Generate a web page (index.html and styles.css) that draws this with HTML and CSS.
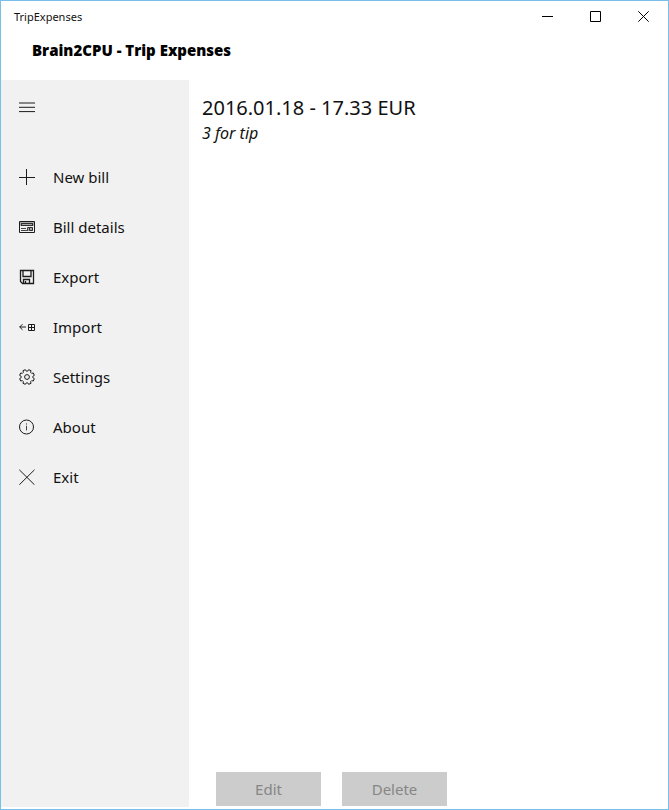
FILE: index.html
```html
<!DOCTYPE html>
<html lang="en">
<head>
  <meta charset="UTF-8">
  <meta name="viewport" content="width=device-width, initial-scale=1.0">
  <title>TripExpenses</title>
  <link rel="stylesheet" href="styles.css">
</head>
<body>
  <div class="window">
    <header class="title-bar">
      <span class="app-name">TripExpenses</span>
      <div class="window-controls">
        <button type="button" aria-label="Minimize">
          <svg width="11" height="11" viewBox="0 0 11 11"><path d="M0 5.5h11"/></svg>
        </button>
        <button type="button" aria-label="Maximize">
          <svg width="11" height="11" viewBox="0 0 11 11"><path d="M.5 .5h10v10h-10z"/></svg>
        </button>
        <button type="button" aria-label="Close">
          <svg width="11" height="11" viewBox="0 0 11 11"><path d="M.3 .3l10.4 10.4M10.7 .3L.3 10.7"/></svg>
        </button>
      </div>
    </header>

    <h1>Brain2CPU - Trip Expenses</h1>

    <div class="content">
      <nav class="sidebar">
        <button type="button" class="menu-toggle" aria-label="Menu">
          <svg width="16" height="16" viewBox="0 0 16 16"><path d="M0 4h16M0 8.3h16M0 12.6h16"/></svg>
        </button>
        <button type="button" class="menu-item">
          <svg width="16" height="16" viewBox="0 0 16 16"><path d="M0 8.5h16M7.5 0v16"/></svg>
          New bill
        </button>
        <button type="button" class="menu-item">
          <svg width="16" height="16" viewBox="0 0 16 16">
            <path d="M.5 2.5h15v11h-15z"/>
            <path class="light" d="M2 4.5h12M2.5 4v3M13.5 4v3M2 6.5h12M2 9.5h5M2 11.5h6M8.5 12V8.5h2M10.5 8.5h3v3h-3z"/>
            <path class="shade" d="M1 3h14v4h-14zM9 8h5v4h-5z"/>
          </svg>
          Bill details
        </button>
        <button type="button" class="menu-item">
          <svg width="16" height="16" viewBox="0 0 16 16"><path class="heavy" d="M1.5 1.5h13v13h-11l-2-2zM4 1.5v6h8v-6M4.5 14.5v-4h6v4M6.5 12v2.5"/></svg>
          Export
        </button>
        <button type="button" class="menu-item">
          <svg width="16" height="16" viewBox="0 0 16 16"><path d="M.7 8H7M3.5 5.2L.7 8l2.8 2.8M9.5 5.5h6v6h-6zM12.5 5.5v6M9.5 8.5h6"/></svg>
          Import
        </button>
        <button type="button" class="menu-item">
          <svg width="16" height="16" viewBox="0 0 16 16">
            <path d="M13.86 7.28V8.72L15.32 9.62 14.33 12.03 12.65 11.63 11.63 12.65 12.03 14.33 9.62 15.32 8.72 13.86H7.28L6.38 15.32 3.97 14.33 4.37 12.65 3.35 11.63 1.67 12.03 .68 9.62 2.14 8.72V7.28L.68 6.38 1.67 3.97 3.35 4.37 4.37 3.35 3.97 1.67 6.38 .68 7.28 2.14H8.72L9.62 .68 12.03 1.67 11.63 3.35 12.65 4.37 14.33 3.97 15.32 6.38z"/>
            <circle cx="8" cy="8" r="2.4"/>
          </svg>
          Settings
        </button>
        <button type="button" class="menu-item">
          <svg width="16" height="16" viewBox="0 0 16 16"><circle cx="7.5" cy="8" r="7"/><path class="light" d="M7.5 4.4v1.2M7.5 6.8v4.6"/></svg>
          About
        </button>
        <button type="button" class="menu-item">
          <svg width="16" height="16" viewBox="0 0 16 16"><path d="M.3 .8l15.2 15M15.5 .8L.3 15.8"/></svg>
          Exit
        </button>
      </nav>

      <main>
        <ul class="bills">
          <li>
            <p class="bill-title">2016.01.18 - 17.33 EUR</p>
            <p class="bill-note">3 for tip</p>
          </li>
        </ul>
        <div class="actions">
          <button type="button" disabled>Edit</button>
          <button type="button" disabled>Delete</button>
        </div>
      </main>
    </div>
  </div>
</body>
</html>
```

FILE: styles.css
```css
* {
  box-sizing: border-box;
}
body {
  margin: 0;
  font-family: "Noto Sans", "Open Sans", sans-serif;
  color: #111;
  background-color: #fff;
}
button {
  margin: 0;
  padding: 0;
  border: none;
  background: none;
  font: inherit;
  color: inherit;
}
svg {
  display: block;
  flex: none;
  fill: none;
  stroke: #1c1c1c;
  stroke-width: 1;
}
.light {
  stroke: #444;
}
.heavy {
  stroke-width: 1.3;
}
.shade {
  fill: rgba(0, 0, 0, 0.3);
  stroke: none;
}
.window {
  display: flex;
  flex-direction: column;
  min-height: 100vh;
  border: 1px solid #78c0ea;
}
.title-bar {
  display: flex;
  justify-content: space-between;
  align-items: center;
  height: 31px;
  padding: 0 1px 0 13px;
}
.app-name {
  font-size: 11px;
}
.window-controls {
  display: flex;
}
.window-controls button {
  display: flex;
  justify-content: center;
  align-items: center;
  width: 48px;
  height: 31px;
}
.window-controls svg {
  stroke: #000;
}
h1 {
  margin: 0;
  padding: 6px 0 0 31px;
  height: 48px;
  font-family: "Open Sans", "Noto Sans", sans-serif;
  font-size: 15px;
  line-height: 24px;
  font-weight: 800;
  color: #000;
}
.content {
  display: flex;
  flex: 1;
}
.sidebar {
  width: 188px;
  margin-bottom: 2px;
  background-color: #f1f1f1;
}
.menu-toggle {
  display: flex;
  align-items: center;
  width: 50px;
  height: 54px;
  margin-bottom: 18px;
  padding-left: 18px;
}
.menu-item {
  display: flex;
  align-items: center;
  gap: 18px;
  width: 100%;
  height: 50px;
  padding-left: 18px;
  font-size: 15px;
}
.menu-item:hover {
  background-color: #e2e2e2;
}
main {
  display: flex;
  flex-direction: column;
  justify-content: space-between;
  flex: 1;
  padding: 14px 12px 3px 13px;
}
.bills {
  margin: 0;
  padding: 0;
  list-style: none;
}
.bills p {
  margin: 0;
}
.bill-title {
  font-size: 20px;
  line-height: 28px;
}
.bill-note {
  font-size: 16px;
  line-height: 22px;
  font-style: italic;
}
.actions {
  display: flex;
  gap: 21px;
  padding-left: 14px;
}
.actions button {
  width: 105px;
  height: 34px;
  font-size: 15px;
  background-color: #ccc;
  color: #868686;
}
```
